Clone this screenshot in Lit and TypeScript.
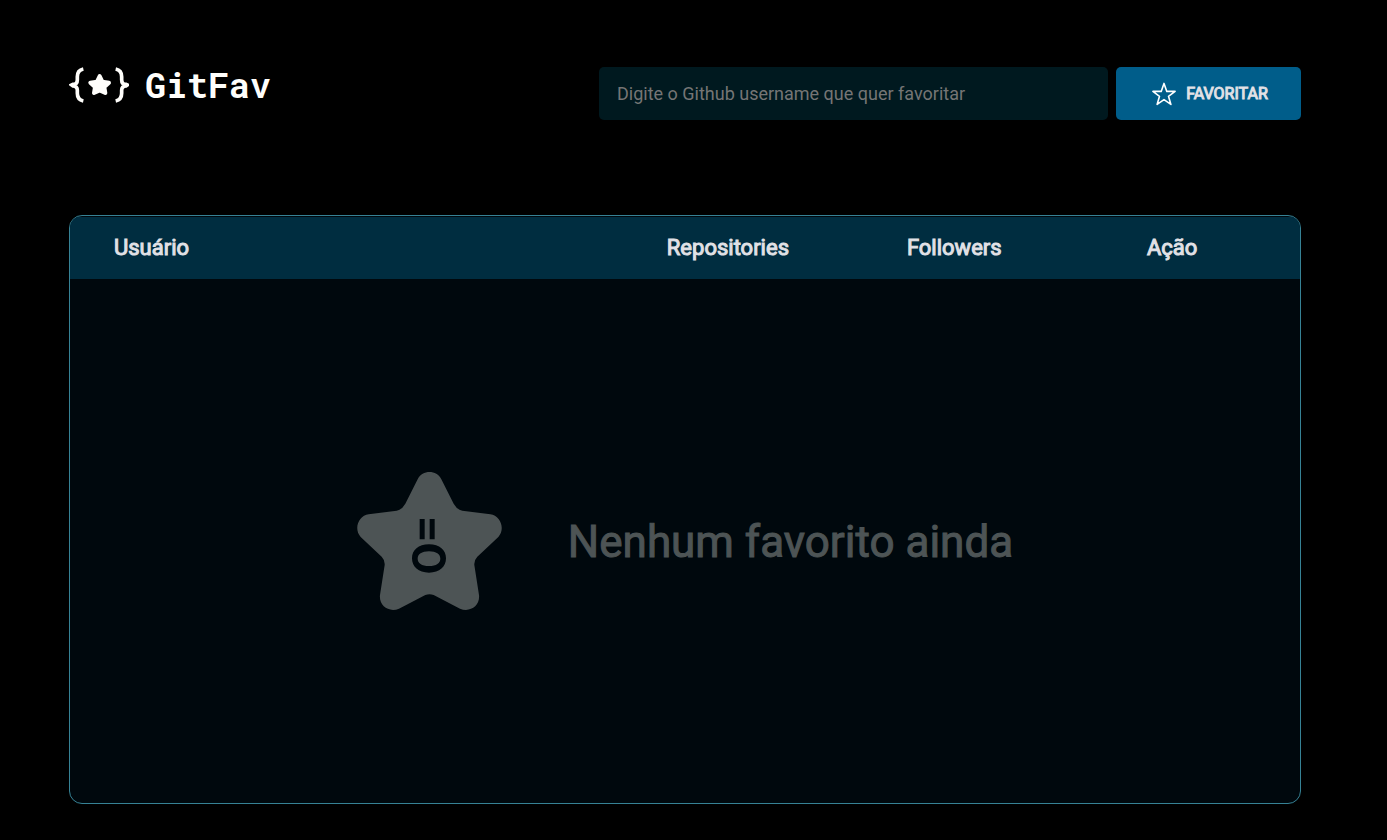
import { LitElement, html, css } from "lit";
import { customElement } from "lit/decorators.js";

@customElement("app-root")
export class AppRoot extends LitElement {
  static styles = css`
    :host {
      display: flex;
      flex-direction: column;
      box-sizing: border-box;
      min-height: 100vh;
      padding: 67px 86px 36px 69px;
      background: #000;
      color: #e1e1e6;
      font-family: Roboto, "Liberation Sans", sans-serif;
    }
    .top {
      display: flex;
      justify-content: space-between;
      align-items: flex-start;
      gap: 32px;
      margin-bottom: 95px;
    }
    .logo {
      display: flex;
      align-items: flex-start;
      gap: 16px;
      margin: 0;
      color: #fffefb;
      font: 700 35px/34px "Roboto Mono", "Liberation Mono", monospace;
    }
    .logo svg {
      display: block;
    }
    .search {
      display: flex;
      flex: 0 1 702px;
      gap: 8px;
    }
    .field {
      flex: 1;
      min-width: 0;
      box-sizing: border-box;
      height: 53px;
      padding: 0 18px;
      border: 0;
      border-radius: 5px;
      background: #00191f;
      color: #e1e1e6;
      font: 400 18px/24px Roboto, "Liberation Sans", sans-serif;
    }
    .field::placeholder {
      color: #757575;
      opacity: 1;
    }
    .add {
      display: flex;
      align-items: center;
      justify-content: center;
      gap: 9px;
      box-sizing: border-box;
      width: 185px;
      height: 53px;
      padding: 0 0 0 2px;
      border: 0;
      border-radius: 5px;
      background: #005d8a;
      color: #e1e1e6;
      font: 400 16px/20px Roboto, "Liberation Sans", sans-serif;
      -webkit-text-stroke: 1px #e1e1e6;
      cursor: pointer;
    }
    .panel {
      display: flex;
      flex: 1;
      padding-top: 1px;
      border: 1px solid #368295;
      border-radius: 13px;
      background: #00080d;
      overflow: hidden;
    }
    .favorites {
      width: 100%;
      table-layout: fixed;
      border-collapse: collapse;
    }
    .user {
      width: 44.9%;
    }
    .count {
      width: 19.5%;
    }
    .action {
      width: 16%;
    }
    th {
      box-sizing: border-box;
      height: 62px;
      padding: 0 0 0 44px;
      background: #002d40;
      text-align: left;
      font-weight: 400;
      font-size: 22px;
      line-height: 28px;
      -webkit-text-stroke: 1px #e1e1e6;
    }
    .none {
      padding: 0;
    }
    .message {
      display: flex;
      align-items: center;
      justify-content: center;
      gap: 66px;
      color: #4d5455;
      font-size: 44px;
      line-height: 54px;
      -webkit-text-stroke: 1px #4d5455;
    }
    .message span {
      padding-top: 2px;
    }
  `;

  render() {
    return html`
      <header class="top">
        <h1 class="logo">
          <svg width="60" height="36" viewBox="0 0 180 108" aria-hidden="true">
            <g fill="none" stroke="#fffefb" stroke-width="11">
              <path d="M43 6C28 9 25 18 25 29v9c0 9-4 14-13 14L8 54l4 3c9 0 13 4 13 13v9c0 11 3 20 18 23" />
              <path d="M140 6c15 3 18 12 18 23v9c0 9 4 14 13 14l4 2-4 3c-9 0-13 4-13 13v9c0 11-3 20-18 23" />
            </g>
            <path
              fill="#fffefb"
              stroke="#fffefb"
              stroke-width="12"
              stroke-linejoin="round"
              d="M92 27l8 17 20 3-14 13 3 18-17-8-17 8 3-18-14-13 20-3z"
            />
          </svg>
          <span>GitFav</span>
        </h1>
        <form class="search" @submit=${(e: Event) => e.preventDefault()}>
          <input
            class="field"
            type="text"
            aria-label="Github username"
            placeholder="Digite o Github username que quer favoritar"
          />
          <button class="add" type="submit">
            <svg width="26" height="26" viewBox="0 0 26 26" aria-hidden="true">
              <path
                fill="none"
                stroke="#fff"
                stroke-width="1.6"
                stroke-linejoin="round"
                d="M13 2.4l2.8 8h8.3l-6.6 4.9 2.4 8.1-6.9-4.8-6.900 4.800 2.400-8.100L1.900 10.400h8.300z"
              />
            </svg>
            <span>FAVORITAR</span>
          </button>
        </form>
      </header>
      <main class="panel">
        <table class="favorites">
          <thead>
            <tr>
              <th class="user">Usuário</th>
              <th class="count">Repositories</th>
              <th class="count">Followers</th>
              <th class="action">Ação</th>
            </tr>
          </thead>
          <tbody>
            <tr>
              <td class="none" colspan="4">
                <div class="message">
                  <svg width="145" height="138" viewBox="36 36 435 414" aria-hidden="true">
                    <path
                      fill="#4d5455"
                      d="M218 58C232 29 275 29 289 58L326 131Q335 148 352 152L436 163C466 167 482 206 460 231L397 290Q387 300 388 315L402 405C406 437 375 459 345 446L266 405Q253.500 400 241 405L162 446C132 459 101 437 105 405L119 315Q120 300 110 290L47 231C25 206 41 167 71 163L155 152Q172 148 181 131Z"
                    />
                    <path fill="#00080d" d="M224 177h15v61h-15zM254 177h15v61h-15z" />
                    <path
                      fill="#00080d"
                      fill-rule="evenodd"
                      d="M252 253c32 0 51 17 51 42s-19 43-51 43-51-18-51-43 19-42 51-42zm0 21c-22 0-34 9-34 22s12 22 34 22 34-9 34-22-12-22-34-22z"
                    />
                  </svg>
                  <span>Nenhum favorito ainda</span>
                </div>
              </td>
            </tr>
          </tbody>
        </table>
      </main>
    `;
  }
}
